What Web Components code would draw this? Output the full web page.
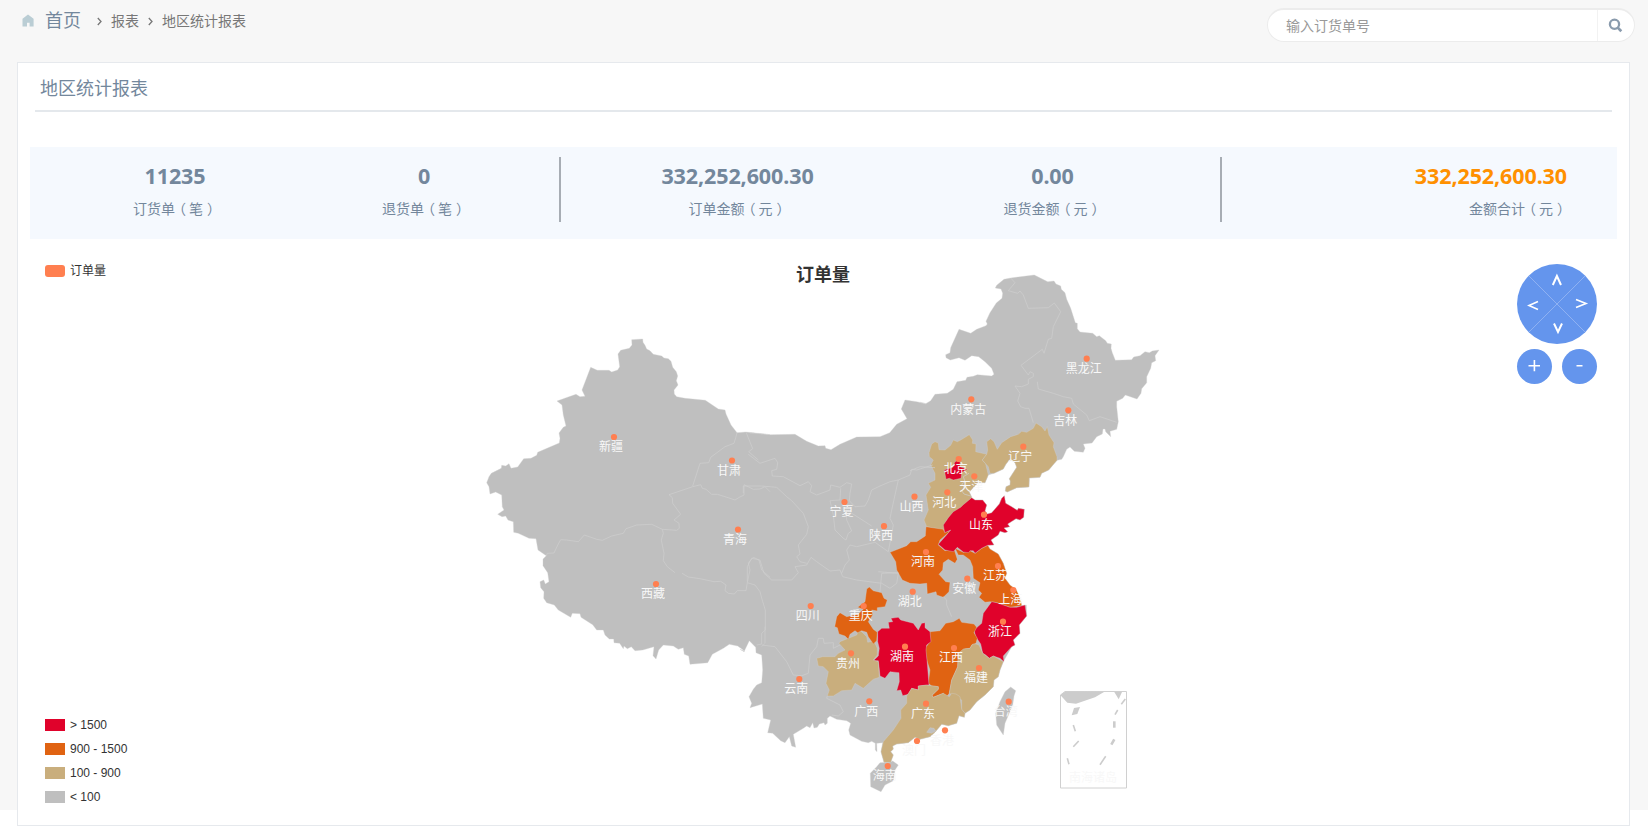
<!DOCTYPE html>
<html lang="zh-CN">
<head>
<meta charset="utf-8">
<title>地区统计报表</title>
<style>
html{background:#fff}
body{margin:0;height:827px;overflow:hidden;background:linear-gradient(#f7f7f7,#f7f7f7) 0 0/100% 810px no-repeat;font-family:"Noto Sans","Noto Sans CJK SC",sans-serif;color:#73879c}
</style>
</head>
<body>
<report-page></report-page>
<script>
const define = (name, html, setup) => customElements.define(name, class extends HTMLElement {
  constructor() {
    super();
    const root = this.attachShadow({ mode: 'open' });
    const t = document.createElement('template');
    t.innerHTML = html;
    root.append(t.content.cloneNode(true));
  }
  connectedCallback() { if (setup) setup(this, this.shadowRoot); }
});

define('crumb-bar', `
<style>
:host{display:flex;align-items:center;height:40px;font:14px/20px "Noto Sans CJK SC",sans-serif;color:#777;white-space:nowrap}
svg{display:block;flex:none}
.home{margin:0 11px 0 0}
.first{font-size:18px;color:#73879c;width:36px;margin:0 16px 3px 0}
.sep{margin:2px 9px 0 0}
.mid{margin-right:9px}
</style>
<svg class="home" width="12" height="13" viewBox="0 0 12 13"><path fill="#bacdd4" d="M6 0.5 0.5 4.8V12.5H5V8.7H7.6V12.5H11.6V4.8Z"/></svg>
<span class="first">首页</span>
<svg class="sep" width="5" height="9" viewBox="0 0 5 9"><path fill="none" stroke="#777" stroke-width="1.3" d="M.8 1 4 4.5.8 8"/></svg>
<span class="mid">报表</span>
<svg class="sep" width="5" height="9" viewBox="0 0 5 9"><path fill="none" stroke="#777" stroke-width="1.3" d="M.8 1 4 4.5.8 8"/></svg>
<span>地区统计报表</span>`);

define('search-box', `
<style>
:host{display:flex;align-items:center;box-sizing:border-box;width:368px;height:34px;border:1px solid #ececec;border-top-width:2px;border-radius:17px;background:#fff;overflow:hidden;font:14px/20px "Noto Sans CJK SC",sans-serif;color:#999}
span{flex:1;padding:0 0 2px 18px}
i{display:flex;align-items:center;padding-left:10px;width:26px;height:100%;border-left:1px solid #f2f2f2}
</style>
<span>输入订货单号</span><i><svg width="15" height="15" viewBox="0 0 15 15"><circle cx="6.5" cy="6.2" r="4.6" fill="none" stroke="#8a9bad" stroke-width="2.3"/><path stroke="#8a9bad" stroke-width="2.7" d="M9.5 9.4 13.3 13.2"/></svg></i>`);

define('stat-item', `
<style>
:host{display:block;text-align:center;white-space:nowrap}
:host([end]){text-align:right}
b{display:block;font:bold 21.5px/30px "Noto Sans",sans-serif;letter-spacing:-.1px}
span{display:block;margin-top:6px;font:14px/22px "Noto Sans CJK SC",sans-serif}
:host([end]) b{color:#ff9000}
</style><b><slot></slot></b><span><slot name="label"></slot></span>`);

define('stat-strip', `
<style>
:host{display:grid;grid-template-columns:290px 239px 2px 353px 306px 2px 1fr;height:92px;box-sizing:border-box;padding-top:10px;background:#f5f9fe}
hr{width:2px;height:65px;margin:0;border:0;background:#a7adb4}
stat-item{padding-top:4px}
i{font-style:normal;margin:0 3px 0 -3px}
i+i{margin:0 -4px 0 4px}
</style>
<stat-item>11235<span slot="label">订货单<i>（</i>笔<i>）</i></span></stat-item>
<stat-item style="padding-right:31px">0<span slot="label">退货单<i>（</i>笔<i>）</i></span></stat-item>
<hr>
<stat-item>332,252,600.30<span slot="label">订单金额<i>（</i>元<i>）</i></span></stat-item>
<stat-item style="padding-right:29px">0.00<span slot="label">退货金额<i>（</i>元<i>）</i></span></stat-item>
<hr>
<stat-item end style="padding-right:50px">332,252,600.30<span slot="label">金额合计<i>（</i>元<i>）</i></span></stat-item>`);

define('roam-pad', `
<style>:host{display:block;width:82px;height:122px}svg{display:block}</style>
<svg width="82" height="122" viewBox="1516 263 82 122">
<g fill="#6495ed"><circle cx="1557" cy="304" r="40"/><circle cx="1534.5" cy="366.5" r="17.5"/><circle cx="1579.5" cy="366.5" r="17.5"/></g>
<path stroke="#9ab9f3" stroke-width=".8" d="M1529 276 1585 332M1585 276 1529 332"/>
<g fill="none" stroke="#fff" stroke-width="2"><path d="M1552.8 285 1556.9 276 1561 285"/><path d="M1554 323.5 1558 332 1562 323.5"/><path stroke-width="1.6" d="M1538 301.5 1529 305.5 1538 309.5M1576 299.5 1586 303.5 1576 307.5"/><path stroke-width="1.6" d="M1528.5 365.8H1540M1534.4 360V371.2M1576.5 365.8H1582.5"/></g>
</svg>`);

define('series-legend', `
<style>
:host{display:flex;align-items:center;gap:5px;font:12px/18px "Noto Sans CJK SC",sans-serif;color:#333}
i{width:20px;height:12px;border-radius:3px;background:#ff7f50}
span{margin-top:-1px}
</style><i></i><span>订单量</span>`);

define('range-legend', `
<style>
:host{display:grid;gap:6px;font:12px/18px "Liberation Sans",sans-serif;color:#333}
div{display:flex;align-items:center;gap:5px}
i{width:20px;height:12px}
</style>
<div><i style="background:#e0022b"></i>&gt; 1500</div>
<div><i style="background:#e06312"></i>900 - 1500</div>
<div><i style="background:#c9ae7d"></i>100 - 900</div>
<div><i style="background:#bfbfbf"></i>&lt; 100</div>`);

/* Outlines are stored in tiles, three units to the pixel; each tile has its own origin. */
const TILES = { A: [470, 320], B: [740, 400], C: [920, 260], D: [910, 430], E: [830, 570], F: [1000, 660] };
const trace = (src, close = true) => {
  let tile, pts = [];
  for (const tok of src.trim().split(/\s+/)) {
    if (TILES[tok]) { tile = TILES[tok]; continue; }
    const [x, y] = tok.split(',').map(Number);
    pts.push((tile[0] + x / 3).toFixed(1) + ' ' + (tile[1] + y / 3).toFixed(1));
  }
  return 'M' + pts.join('L') + (close ? 'Z' : '');
};
const LIAO_COAST = 'C 386,630 365,640 360,652 328,654 327,681 290,683 262,696 256,693 258,680 270,675 271,663 268,656 290,622 285,608 276,601 267,601 258,612 250,627 222,640';
const SD_COAST = 'D 185,203 195,210 218,210 230,225 225,243 232,252 245,248 268,222 275,205 283,197 287,220 305,230 322,241 325,235 343,238 341,262 330,270 318,266 293,282 299,290 282,294 293,305 285,308 270,304 265,315 243,330 252,345 233,346';
const GD_COAST = 'E 405,430 403,442 387,437 380,460 355,467 335,463 315,487 300,500 270,508 255,502 235,518 200,522 188,528 190,537 182,545 190,555 182,577';
const LAND = `A 50,488 57,470 64,460 94,445 95,436 107,438 117,431 123,445 143,441 161,416 183,415 200,406 203,397 268,369 270,355 267,339 280,322 288,318 280,285 276,255 261,243 318,223 330,230 345,229 336,210 362,142 382,151 417,151 425,156 443,150 449,140 444,102 452,91 478,85 486,75 485,59 518,57 519,67 525,76 530,87 540,92 550,103 575,108 582,114 595,116 603,124 608,142 619,155 623,168 619,182 624,195 612,210 613,222 620,230 645,235 706,241 745,267 765,270 768,282 783,315 801,338 828,336 900,344
B 30,99 90,104 165,103 200,124 235,138 255,137 257,145 273,149 300,133 350,111 420,110 449,98 470,73 501,56 484,27 495,0 530,5 557,11
C 0,427 17,431 32,422 45,403 82,400 100,388 111,365 137,361 141,352 160,349 172,344 215,348 222,343 215,325 195,305 176,290 155,287 135,301 117,293 91,300 78,293 77,284 90,278 92,263 117,208 152,220 170,208 198,197 202,192 198,184 210,158 229,129 246,115 248,100 243,87 226,84 230,76 252,58 272,54 343,45 383,65 402,63 408,72 422,78 424,88 435,98 440,118 452,145 466,188 472,190 472,206 480,216 518,220 530,230 538,227 557,242 562,250 574,252 573,265 577,278 586,301 635,299 641,291 660,287 675,275 688,278 697,273 717,270 705,287 707,302 695,308 692,325 680,350 680,368 665,386 663,400 651,417 616,405 608,415 590,424 590,440 595,485 590,508 570,514 572,530 557,515 555,507 549,507 547,522 530,530 516,549 490,552 495,565 490,577 463,574 450,561 440,568 430,590 425,598 411,601
${LIAO_COAST} C 205,645 195,668 175,667 148,696 155,710 ${SD_COAST} D 240,357 265,372 280,400 290,430 285,445 300,465 320,490
E 575,107 589,105 590,138 568,165 570,190 550,210 555,225 545,230 520,275 510,300 505,320 492,330 490,350 465,375 440,395 420,420 ${GD_COAST}
E 162,577 153,545 158,518 140,520 141,545 136,540 136,520 125,514 115,518 95,514 60,495 56,480 62,460 50,452 20,448 0,438
B 262,955 262,970 255,975 252,968 238,972 232,982 222,984 218,968 210,983 200,978 190,985 160,1003 167,1042 155,1038 148,1010 135,1028 122,1022 98,1000 83,998 92,960 70,955 67,912 30,923 35,910 27,890 40,868 50,855 65,848 68,810 65,765 48,758 47,742 28,722 12,755 0,748
A 825,994 803,978 778,973 760,985 727,1003 713,1028 660,1033 656,1008 643,1003 640,983 625,988 610,978 580,975 566,990 558,1017 549,1007 552,980 518,990 495,992 484,980 472,986 462,978 460,986 449,970 432,968 431,957 418,957 405,945 400,930 380,930 368,914 333,892 330,881 307,880 302,892 265,870 253,855 230,848 221,835 222,815 212,803 210,785 221,780 226,792 237,785 233,758 219,737 219,717 229,707 204,690 198,656 177,655 145,640 131,637 130,605 114,600 107,588 96,590 83,583 102,570 97,560 95,525 77,516 60,522 57,500`;
const AREAS = [
  ['#bfbfbf', LAND],
  ['#bfbfbf', 'E 542,351 557,362 552,378 548,405 525,460 520,495 500,465 497,430 510,395 525,365'],
  ['#bfbfbf', 'E 140,590 150,578 178,577 188,573 205,585 195,600 190,632 165,645 153,665 122,650 121,610'],
  ['#c9ae7d', 'C 27,578 35,552 45,545 55,549 57,569 75,570 92,556 100,540 112,545 122,540 148,524 158,540 157,550 168,552 167,575 200,583 187,600 197,612 205,645 195,668 175,667 148,696 D 185,203 160,230 130,250 110,270 103,285 105,300 88,298 50,290 42,270 55,240 48,195 62,172 55,160 75,150 75,130 62,105 70,90 58,80'],
  ['#c9ae7d', 'C 203,570 200,545 212,536 222,545 232,568 245,548 272,530 295,523 305,514 320,517 340,505 348,489 365,500 375,513 382,500 387,525 402,548 400,560 411,590 411,601 ' + LIAO_COAST + ' C 210,640 205,620 187,600 200,583'],
  ['#e06312', 'B 450,457 500,437 512,425 530,425 556,408 558,380 610,388 614,397 632,392 600,420 595,435 615,452 642,447 652,478 645,490 625,478 610,488 608,510 597,523 617,545 630,547 627,575 610,592 590,585 588,575 562,582 560,550 540,552 510,550 487,540 470,510 467,485'],
  ['#e06312', 'D 135,355 160,367 180,362 195,370 215,355 233,346 240,357 265,372 280,400 290,430 285,445 300,465 318,478 E 565,72 573,95 575,107 540,112 500,98 480,95 465,97 447,82 455,70 445,60 450,38 430,25 D 188,410 180,390 160,375 145,375'],
  ['#e0022b', SD_COAST + ' D 215,355 195,370 190,362 180,362 176,368 160,366 142,352 130,365 105,360 85,343 105,320 122,300 104,308 100,285 115,263 130,245 152,232 160,224'],
  ['#e0022b', 'E 485,95 500,98 540,112 560,112 585,105 590,138 568,165 570,190 550,210 555,225 545,230 520,258 522,275 510,265 490,258 478,265 467,255 458,250 452,222 437,200 432,180 455,160 460,130'],
  ['#e06312', 'E 300,185 330,182 347,160 370,155 388,145 395,157 432,162 440,172 432,188 442,205 438,220 425,225 420,235 403,237 400,248 385,250 383,290 365,330 358,370 350,380 340,370 310,382 306,376 325,358 325,350 305,348 295,340 300,300 290,270 285,235 300,215'],
  ['#e0022b', 'E 143,185 155,175 178,175 175,157 188,155 183,145 205,142 212,150 232,155 250,160 265,180 275,160 285,158 285,173 300,185 303,215 290,225 288,240 292,280 297,345 265,348 265,360 245,355 235,373 218,377 212,360 200,362 208,335 207,308 180,305 165,325 150,318 148,298 145,272 130,272 145,258 148,235 143,215'],
  ['#c9ae7d', 'E 400,237 420,235 428,222 438,222 447,225 458,250 478,265 490,258 520,275 510,300 505,320 492,330 490,350 465,375 440,395 420,420 405,430 395,418 395,390 380,380 358,370 365,330 383,290 385,250'],
  ['#c9ae7d', 'E 230,378 245,355 265,360 265,348 290,345 325,350 325,358 306,376 310,382 340,370 358,380 365,370 378,372 390,380 395,418 ' + GD_COAST + ' E 162,577 153,545 160,515 190,480 213,445 212,420 230,400'],
  ['#c9ae7d', 'B 300,725 325,715 350,705 355,693 365,695 380,710 383,727 402,723 412,745 412,765 400,780 415,785 418,832 400,838 370,865 345,850 335,870 305,872 280,888 262,888 268,870 258,850 265,815 250,800 235,798 230,775 248,770 285,770 295,760 315,750 297,730'],
  ['#e06312', 'B 378,583 380,567 388,561 400,572 425,578 432,595 442,600 435,620 412,623 412,633 395,630 398,645 385,665 400,688 412,697 410,722 400,732 385,710 380,697 365,692 353,698 345,692 330,703 325,718 315,708 297,702 292,683 284,680 290,650 300,638 320,650 355,642 370,628 353,622 375,605'],
  ['#e0022b', 'D 103,120 128,112 135,95 150,88 150,110 172,118 155,128 153,145 130,150 118,145 108,148'],
  ['#bfbfbf', 'E 290,487 300,473 312,475 317,483 305,490']
];
const BORDERS = [
  'A 229,707 232,700 252,699 257,688 265,672 272,659 290,660 325,665 343,645 358,650 380,658 397,661 425,648 460,640 468,626 500,615 545,613 577,628 580,640 574,660 582,700 580,722 592,740 615,758',
  'A 577,628 620,631 628,625 627,610 612,600 632,583 608,550 607,533 597,524 668,500 692,494 697,505 708,508 725,523 742,523 765,530 795,540 808,532 822,525 822,494 850,508 870,507 885,500 900,515',
  'A 668,498 690,430 716,428 722,412 765,380 792,370 797,353 801,338', 'A 828,336 848,386 836,395 865,420',
  'A 636,760 655,771 690,776 732,785 752,784 768,795 765,812 775,820 793,822 802,812 828,812 832,788 855,795 870,815 878,845 886,870 886,930 875,940 875,972 860,975',
  'A 832,788 840,750 835,728 850,712 867,720 875,750 900,772',
  'B 25,163 60,190 105,175 113,188 110,208 95,212 97,228 130,230 180,257 205,245 215,257 210,275 230,285 270,270 272,255 300,262 320,248 335,252 330,280 328,302 345,320 375,318 385,300 395,270 420,258 450,245 475,240',
  'B 10,280 10,258 65,258 110,262 140,290 155,302 190,340 205,380 200,403 175,435 180,462 170,470 180,485 200,490',
  'B 22,545 22,500 35,475 60,480 72,520 95,540 155,540 175,518 165,500 200,495 213,472 230,485 270,513 300,510 308,530 350,540 425,550 450,565 470,550 475,520 415,515',
  'B 75,680 75,730 65,740',
  'B 302,265 300,300 270,302 280,345 285,390 310,415 318,420 325,400 335,393 320,360 320,330 395,378',
  'B 578,195 530,210 515,208 510,225 475,240 455,330 450,355 460,375 445,455 405,427 350,440 330,435 320,450 328,480 315,495 305,520',
  'B 475,518 425,520 420,575', 'B 65,735 105,740 140,785 160,825 185,827 205,820 210,765 230,740 235,715 250,715 252,730 280,728 280,745 300,735',
  'B 262,888 260,895 300,915 310,935 295,948 275,945', 'B 610,590 620,600 620,615 635,650', 'D 0,122 30,110 75,113',
  'C 272,54 285,68 265,92 293,100 300,93 310,105 325,145 385,143 403,129 422,155 400,200 395,235 385,238 372,280 367,268 303,316 325,345 330,335 340,340 340,350 325,358 325,372 305,380 285,378 300,400 293,423 302,440 315,445 327,445 340,488',
  'C 352,365 355,387 400,400 430,410 455,415 460,432 500,465 508,482 540,470 590,487',
  'D 177,130 160,140 165,155 155,162 165,175 155,182 162,192 182,198'
];
const POINTS = `新疆,614,437 甘肃,732,460.5 青海,738,529.5 西藏,656,584 宁夏,844.5,502 山西,914.5,496.7 陕西,884,526.2 河南,926,552 湖北,912.7,591.7 四川,810.7,606 重庆,863.7,606 湖南,905,646.7 江西,954,648 贵州,851,653.3 云南,799.3,679 广西,869.3,701.3 广东,926,703.7 香港,945,730.3 澳门,917,741 海南,887.7,766 黑龙江,1086.7,358.7 内蒙古,971.3,399.3 吉林,1068.3,410.3 辽宁,1023.3,446.7 北京,958.7,459 天津,974.3,476.3 河北,947.3,492.3 山东,984,514.7 江苏,998,566 安徽,967.3,578.7 上海,1013.3,590 浙江,1003,621.7 福建,979,668 台湾,1008.7,701.7`.split(' ').map(s => s.split(','));

define('china-map', `
<style>
:host{display:block}
svg{display:block}
text{font:12px "Noto Sans CJK SC",sans-serif;text-anchor:middle;fill:#f8f8f8}
.borders path{fill:none;stroke:#cfcfcf;stroke-width:.7}
.title{font-size:18px;font-weight:bold;fill:#333}
</style>
<svg width="1587" height="561" viewBox="30 250 1587 561"></svg>`, (host, root) => {
  let out = '<text class="title" x="823" y="281">订单量</text>';
  for (const [fill, src] of AREAS) out += `<path fill="${fill}" stroke="#d0d0d0" stroke-width=".35" d="${trace(src)}"/>`;
  out += '<g class="borders">' + BORDERS.map(b => `<path d="${trace(b, false)}"/>`).join('') + '</g>';
  out += '<path fill="none" stroke="#d0d0d0" d="M1065 691.5H1126.5V788H1060.5V695Z"/>';
  for (const s of ['181,105 195,95 312,96 285,112 228,131 202,128', '343,96 366,96 356,118', '222,144 240,141 232,162 215,166'])
    out += `<path fill="#ccc" d="${trace('F ' + s)}"/>`;
  out += '<g fill="none" stroke="#ccc" stroke-width="1.6">' + ['376,117 364,133', '353,150 345,164', '220,195 226,214', '236,243 220,260', '202,295 207,313', '317,289 300,314'].map(s => `<path d="${trace('F ' + s, false)}"/>`).join('') +
    ['343,184 343,203', '343,238 334,254'].map(s => `<path stroke-width="2.6" d="${trace('F ' + s, false)}"/>`).join('') + '</g>';
  out += POINTS.map(([n, x, y]) => `<circle cx="${x}" cy="${y}" r="3.1" fill="#ff7f50"/>`).join('');
  out += POINTS.map(([n, x, y]) => `<text x="${x - 3}" y="${+y + 14.2}">${n}</text>`).join('');
  out += '<text x="1093" y="782">南海诸岛</text>';
  root.querySelector('svg').innerHTML = out;
});

define('map-chart', `
<style>
:host{display:block;position:relative;margin-top:11px}
series-legend{position:absolute;left:15px;top:12px}
range-legend{position:absolute;left:15px;top:466px}
roam-pad{position:absolute;right:19px;top:13px}
</style>
<china-map></china-map><series-legend></series-legend><range-legend></range-legend><roam-pad></roam-pad>`);

define('report-card', `
<style>
:host{display:block;box-sizing:border-box;height:764px;border:1px solid #e6e9ed;background:#fff;padding:0 12px}
h2{margin:0 5px 35px 5px;padding:10px 0 0 5px;height:37px;border-bottom:2px solid #e4e8ec;font:18px/28px "Noto Sans CJK SC",sans-serif;color:#73879c}
</style>
<h2><slot></slot></h2><stat-strip></stat-strip><map-chart></map-chart>`);

define('report-page', `
<style>
:host{display:block}
header{display:flex;justify-content:space-between;height:62px;padding:0 13px 0 22px}
search-box{margin-top:8px}
report-card{margin:0 18px 0 17px}
</style>
<header><crumb-bar></crumb-bar><search-box></search-box></header>
<report-card>地区统计报表</report-card>`);
</script>
</body>
</html>
